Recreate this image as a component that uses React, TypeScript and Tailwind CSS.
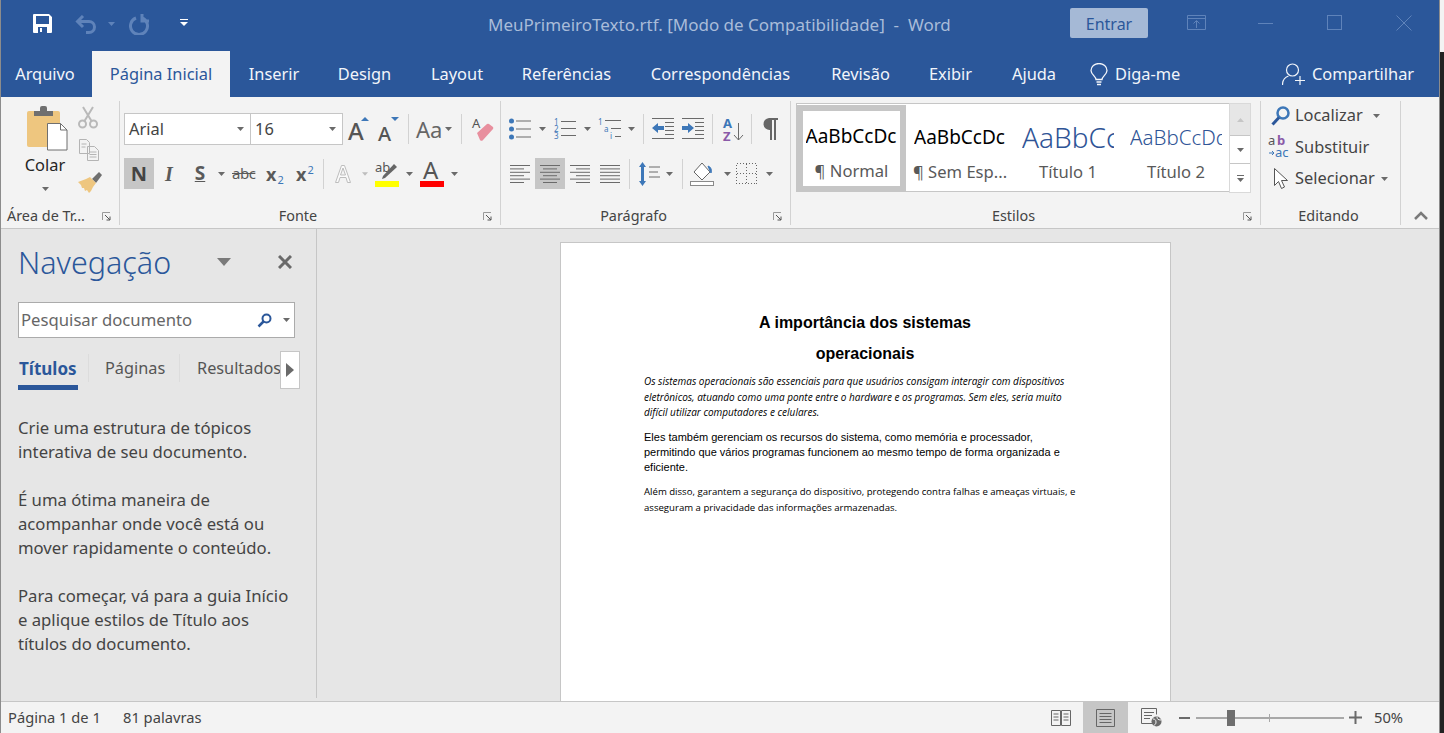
import React from "react";

const G = "#6a6a6a";
const B = "#3d77b8";
const L = "#7a7a7a";

function Caret({ className = "", color = G, w = 7 }: { className?: string; color?: string; w?: number }) {
  return (
    <svg className={`shrink-0 ${className}`} width={w} height={4} viewBox="0 0 7 4">
      <path d="M0 0h7L3.5 4z" fill={color} />
    </svg>
  );
}

function Sep({ className = "" }: { className?: string }) {
  return <div className={`w-px h-[30px] bg-[#d2d2d2] shrink-0 ${className}`} />;
}

function Launcher() {
  return (
    <svg className="absolute right-[8px] top-[6px]" width="9" height="9" viewBox="0 0 9 9" fill="none">
      <path d="M.5 8V.5H8" stroke="#9a9a9a" />
      <path d="M3 3l5 5M8 4.5V8H4.5" stroke="#555" />
    </svg>
  );
}

function Lines({ kind, className = "" }: { kind: "l" | "c" | "r" | "j"; className?: string }) {
  const rows = [0, 1, 2, 3, 4, 5];
  const short = kind === "j" ? 20 : 14;
  return (
    <svg className={`shrink-0 ${className}`} width="20" height="20" viewBox="0 0 20 20">
      {rows.map((r) => {
        const w = r % 2 === 0 ? 20 : short;
        const x = kind === "l" ? 0 : kind === "r" ? 20 - w : (20 - w) / 2;
        return <rect key={r} x={x} y={1 + r * 3.4} width={w} height="1" fill={G} />;
      })}
    </svg>
  );
}

function Tab({ w, children, active }: { w: string; children: React.ReactNode; active?: boolean }) {
  return (
    <div
      className={`${w} h-[46px] pt-[1px] flex items-center justify-center shrink-0 whitespace-nowrap ${
        active ? "bg-[#f3f3f3] text-[#2b579a]" : "text-[#f2f5fa]"
      }`}
    >
      {children}
    </div>
  );
}

function GroupLabel({ children, launcher, className = "" }: { children: React.ReactNode; launcher?: boolean; className?: string }) {
  return (
    <div className={`relative h-[20px] mt-auto mb-[-1px] flex items-center justify-center text-[14.4px] text-[#444] whitespace-nowrap ${className}`}>
      {children}
      {launcher && <Launcher />}
    </div>
  );
}

function Style({ preview, label, selected, previewClass }: { preview: string; label: string; selected?: boolean; previewClass: string }) {
  return (
    <div
      className={`h-[87px] flex flex-col items-center shrink-0 ${
        selected ? "w-[109px] -mt-px border-[6px] border-[#c6c6c6] pt-[2px]" : "w-[108px] pt-[8px] px-[8px]"
      }`}
    >
      <div className={`h-[46px] w-[92px] overflow-hidden flex items-center whitespace-nowrap shrink-0 ${previewClass}`}>{preview}</div>
      <div className="text-[16.6px] leading-[24px] text-[#595959] whitespace-nowrap">{label}</div>
    </div>
  );
}

export default function App() {
  return (
    <div className="w-[1444px] h-[733px] flex overflow-hidden bg-[#222] font-['Noto_Sans',sans-serif]">
      <div className="w-[1440px] h-[733px] flex flex-col border-x border-[#8c8c8c] shrink-0">
        {/* Title bar */}
        <div className="h-[51px] bg-[#2b579a] flex shrink-0 relative">
          <svg className="ml-[32px] mt-[14px]" width="19" height="19" viewBox="0 0 19 19">
            <path fillRule="evenodd" fill="#fff" d="M0 1a1 1 0 011-1h15l3 3v15a1 1 0 01-1 1H1a1 1 0 01-1-1zM3 2v8h13V2zM5 13v6h9v-6zM7 14h2v4H7z" />
          </svg>
          <svg className="ml-[23px] mt-[15px]" width="22" height="19" viewBox="0 0 22 19" fill="none" stroke="#5f83ba" strokeWidth="3">
            <path d="M8 1L2.500 6.500 8 12M3 6.500h11a5.500 5.500 0 010 11h-3" />
          </svg>
          <Caret className="ml-[11px] mt-[22px]" color="#5f83ba" />
          <svg className="ml-[14px] mt-[14px]" width="21" height="21" viewBox="0 0 21 21" fill="none" stroke="#5f83ba" strokeWidth="3">
            <path d="M7 4a8.500 8.500 0 106 0M13 0v7h7" />
          </svg>
          <svg className="ml-[30px] mt-[19px]" width="8" height="7" viewBox="0 0 8 7">
            <path d="M0 0h8v1H0zM0 3h8L4 7z" fill="#fff" />
          </svg>
          <div className="absolute left-[487px] top-[13px] text-[17px] leading-[24px] text-[#a9bcd9] whitespace-pre">MeuPrimeiroTexto.rtf. [Modo de Compatibilidade]  -  Word</div>
          <div className="absolute left-[1069px] top-[8px] w-[78px] h-[30px] pt-[1px] rounded-[2px] bg-[#a5b9d6] text-[#2b579a] text-[16px] flex items-center justify-center">Entrar</div>
          <svg className="absolute left-[1186px] top-[15px]" width="19" height="15" viewBox="0 0 19 15" fill="none" stroke="#5f83ba">
            <path d="M.5.500h18v14H.5zM.5 3.500h18M9.500 13V6M6.500 8.500l3-3 3 3" />
          </svg>
          <div className="absolute left-[1257px] top-[23px] w-[15px] h-px bg-[#5f83ba]" />
          <div className="absolute left-[1326px] top-[15px] w-[15px] h-[15px] border border-[#5f83ba]" />
          <svg className="absolute left-[1395px] top-[15px]" width="16" height="16" viewBox="0 0 16 16" fill="none" stroke="#5f83ba">
            <path d="M.5.500l15 15M15.500.500l-15 15" />
          </svg>
        </div>

        {/* Tabs */}
        <div className="h-[46px] bg-[#2b579a] flex text-[16.4px] shrink-0">
          <Tab w="w-[91px] pr-[3px]">Arquivo</Tab>
          <Tab w="w-[138px]" active>Página Inicial</Tab>
          <Tab w="w-[88px]">Inserir</Tab>
          <Tab w="w-[93px]">Design</Tab>
          <Tab w="w-[92px]">Layout</Tab>
          <Tab w="w-[127px]">Referências</Tab>
          <Tab w="w-[181px]">Correspondências</Tab>
          <Tab w="w-[99px]">Revisão</Tab>
          <Tab w="w-[81px]">Exibir</Tab>
          <Tab w="w-[86px]">Ajuda</Tab>
          <div className="flex items-center pt-[1px] text-[#f2f5fa] w-[205px] shrink-0">
            <svg className="ml-[13px]" width="18" height="23" viewBox="0 0 18 23" fill="none" stroke="#f2f5fa" strokeWidth="1.300">
              <path d="M6 16.500c0-3-5-5-5-9a8 7 0 0116 0c0 4-5 6-5 9zM6.500 19h5M7 21.500h4" />
            </svg>
            <span className="ml-[7px] whitespace-nowrap">Diga-me</span>
          </div>
          <div className="flex items-center pt-[1px] text-[#f2f5fa]">
            <svg width="23" height="23" viewBox="0 0 23 23" fill="none" stroke="#f2f5fa" strokeWidth="1.200">
              <circle cx="10.500" cy="7" r="6" />
              <path d="M.5 22c0-5 3-8 6-9M18 13v9M13 17.500h10" />
            </svg>
            <span className="ml-[7px] whitespace-nowrap">Compartilhar</span>
          </div>
        </div>

        {/* Ribbon */}
        <div className="h-[132px] bg-[#f3f3f3] border-b border-[#c6c6c6] pt-[4px] flex shrink-0">
          {/* Clipboard */}
          <div className="w-[119px] h-[124px] border-r border-[#d2d2d2] flex flex-col shrink-0">
            <div className="flex">
              <div className="w-[88px] flex flex-col items-center shrink-0">
                <svg className="mt-[5px] ml-[5px]" width="41" height="45" viewBox="0 0 41 45">
                  <rect x="0" y="5" width="33" height="36" rx="2" fill="#eec67f" />
                  <path d="M7 5h6V2a2 2 0 012-2h3a2 2 0 012 2v3h6v5H7z" fill="#6f6f6f" />
                  <path d="M20.500 17.500h13l6.500 6.500v20H20.500z" fill="#fff" stroke="#6f6f6f" />
                  <path d="M33.500 17.500V24H40" fill="none" stroke="#6f6f6f" />
                </svg>
                <div className="h-[20px] mt-[4px] text-[16.4px] leading-[20px] text-[#262626]">Colar</div>
                <Caret className="mt-[12px]" />
              </div>
              <div className="-ml-[11px] flex flex-col">
                <svg className="mt-[5px]" width="20" height="23" viewBox="0 0 20 23" fill="none" stroke="#b9b9b9" strokeWidth="2">
                  <circle cx="4.500" cy="18" r="3.500" />
                  <circle cx="15.500" cy="18" r="3.500" />
                  <path d="M6.500 15L15 1M13.500 15L5 1" />
                </svg>
                <svg className="mt-[10px] ml-px" width="20" height="22" viewBox="0 0 20 22" fill="#f3f3f3" stroke="#b4b4b4">
                  <path d="M.5.500h7l3 3v11H.5zM8.500 7.500h7l4 4v10h-11z" />
                  <path d="M2.500 5h5M2.500 8h4M10.500 13h7M10.500 15.500h7M10.500 18h7" />
                </svg>
                <svg className="mt-[11px]" width="24" height="21" viewBox="0 0 24 21">
                  <path d="M14 7l7-7 3 3-6 8z" fill="#6f6f6f" />
                  <path d="M0 10l8-3 4-2 6 6-3 4-2 4-2 2-2-3-2 1-1-3-2 0-1-3-3-3z" fill="#eec67f" />
                </svg>
              </div>
            </div>
            <GroupLabel className="justify-start pl-[6px]" launcher>Área de Tr...</GroupLabel>
          </div>

          {/* Font */}
          <div className="w-[381px] h-[124px] border-r border-[#d2d2d2] flex flex-col shrink-0">
            <div className="flex items-center mt-[12px] pl-[4px] h-[32px]">
              <div className="w-[127px] h-[32px] bg-white border border-[#c6c6c6] flex items-center text-[16.4px] text-[#444] pl-[4px] shrink-0">
                <span>Arial</span>
                <Caret className="ml-auto mr-[6px]" />
              </div>
              <div className="w-[93px] -ml-px h-[32px] bg-white border border-[#c6c6c6] flex items-center text-[16.4px] text-[#444] pl-[4px] shrink-0">
                <span>16</span>
                <Caret className="ml-auto mr-[6px]" />
              </div>
              <svg className="ml-[5px] overflow-visible" width="22" height="26" viewBox="0 0 22 26">
                <text x="0" y="24" fontSize="24" fontWeight="500" fontFamily="Noto Sans" fill="#555">A</text>
                <path d="M13 5l4-4 4 4z" fill={B} />
              </svg>
              <svg className="ml-[8px] overflow-visible" width="22" height="26" viewBox="0 0 22 26">
                <text x="0" y="25" fontSize="20" fontWeight="500" fontFamily="Noto Sans" fill="#555">A</text>
                <path d="M13 1h8l-4 4z" fill={B} />
              </svg>
              <Sep className="ml-[8px]" />
              <span className="ml-[7px] w-[28px] text-[22px] text-[#666] leading-none whitespace-nowrap">Aa</span>
              <Caret className="ml-[1px]" />
              <Sep className="ml-[9px]" />
              <svg className="ml-[10px] overflow-visible" width="22" height="26" viewBox="0 0 22 26">
                <text x="0" y="12" fontSize="13" fontFamily="Noto Sans" fill="#555">A</text>
                <path d="M5 17L15 8a2 2 0 012 0l4 3a2 2 0 010 2L11 24a2 2 0 01-3 0z" fill="#e88f9e" />
              </svg>
            </div>
            <div className="flex items-center mt-[13px] pl-[4px] h-[31px] text-[#5a5a5a]">
              <div className="w-[30px] h-[31px] bg-[#c6c6c6] flex items-center justify-center text-[20px] font-bold text-[#444] shrink-0">N</div>
              <span className="ml-[8px] w-[14px] text-center text-[20px] font-bold italic font-['Liberation_Serif',serif] shrink-0">I</span>
              <span className="ml-[16px] w-[16px] text-center text-[19px] font-bold underline shrink-0 leading-none">S</span>
              <Caret className="ml-[10px]" />
              <span className="ml-[7px] w-[24px] text-[15px] line-through shrink-0 tracking-[-0.5px]">abc</span>
              <div className="ml-[10px] w-[20px] flex items-baseline shrink-0 text-[18px] font-bold leading-none">x<span className="text-[11px] font-normal text-[#3d77b8] ml-[1px] relative top-[3px]">2</span></div>
              <div className="ml-[10px] w-[20px] flex items-baseline shrink-0 text-[18px] font-bold leading-none">x<span className="text-[11px] font-normal text-[#3d77b8] ml-[1px] relative -top-[7px]">2</span></div>
              <Sep className="ml-[7px]" />
              <svg className="ml-[10px]" width="18" height="20" viewBox="0 0 18 20">
                <path d="M1.500 18.500l6-17h3l6 17h-3l-1.500-5h-6l-1.500 5zM6.500 11h5l-2.500-7z" fill="#fbfbfb" stroke="#bdbdbd" />
              </svg>
              <Caret className="ml-[10px]" color="#bdbdbd" w={6} />
              <svg className="ml-[7px] overflow-visible" width="24" height="26" viewBox="0 0 24 26">
                <text x="0" y="11" fontSize="13" fontFamily="Noto Sans" fill="#555">ab</text>
                <path d="M8 15l11-12 3 3-12 11-3 1z" fill="#666" />
                <rect x="0" y="20" width="24" height="6" fill="#ffff00" />
              </svg>
              <Caret className="ml-[7px]" />
              <svg className="ml-[7px] overflow-visible" width="24" height="26" viewBox="0 0 24 26">
                <text x="3" y="18" fontSize="24" fontFamily="Noto Sans" fill="#555">A</text>
                <rect x="0" y="20" width="24" height="6" fill="#ff0000" />
              </svg>
              <Caret className="ml-[7px]" />
            </div>
            <GroupLabel className="pr-[24px]" launcher>Fonte</GroupLabel>
          </div>

          {/* Paragraph */}
          <div className="w-[290px] h-[124px] border-r border-[#d2d2d2] flex flex-col shrink-0">
            <div className="flex items-center mt-[12px] h-[32px]">
              <svg className="ml-[8px]" width="22" height="22" viewBox="0 0 22 22">
                {[3, 11, 19].map((y) => (
                  <g key={y}><circle cx="2.500" cy={y} r="2.500" fill={B} /><rect x="7" y={y - 0.5} width="15" height="1" fill={G} /></g>
                ))}
              </svg>
              <Caret className="ml-[8px]" />
              <svg className="ml-[8px] overflow-visible" width="22" height="22" viewBox="0 0 22 22">
                {[["1", 7], ["2", 14], ["3", 21]].map(([t, y]) => (
                  <g key={t as string}><text x="0" y={y as number} fontSize="8" fontFamily="Noto Sans" fill={B}>{t}</text><rect x="7" y={(y as number) - 4} width="15" height="1" fill={G} /></g>
                ))}
              </svg>
              <Caret className="ml-[8px]" />
              <svg className="ml-[7px] overflow-visible" width="23" height="22" viewBox="0 0 23 22">
                <text x="0" y="7" fontSize="8" fontFamily="Noto Sans" fill={B}>1</text>
                <text x="6" y="14" fontSize="8" fontFamily="Noto Sans" fill={B}>a</text>
                <text x="12" y="21" fontSize="8" fontFamily="Noto Sans" fill={B}>i</text>
                <rect x="7" y="2" width="16" height="1" fill={G} /><rect x="13" y="10" width="10" height="1" fill={G} /><rect x="17" y="18" width="6" height="1" fill={G} />
              </svg>
              <Caret className="ml-[7px]" />
              <Sep className="ml-[8px]" />
              <svg className="ml-[8px]" width="22" height="22" viewBox="0 0 22 22">
                {[0, 4, 8, 12, 16, 20].map((y, i) => <rect key={y} x={i === 0 || i === 5 ? 0 : 13} y={y} width={i === 0 || i === 5 ? 22 : 9} height="1" fill={G} />)}
                <path d="M0 10l6-5v3h6v4H6v3z" fill={B} />
              </svg>
              <svg className="ml-[8px]" width="22" height="22" viewBox="0 0 22 22">
                {[0, 4, 8, 12, 16, 20].map((y, i) => <rect key={y} x={i === 0 || i === 5 ? 0 : 13} y={y} width={i === 0 || i === 5 ? 22 : 9} height="1" fill={G} />)}
                <path d="M12 10L6 5v3H0v4h6v3z" fill={B} />
              </svg>
              <Sep className="ml-[8px]" />
              <svg className="ml-[10px] overflow-visible" width="20" height="24" viewBox="0 0 20 24">
                <text x="0" y="11" fontSize="13" fontWeight="700" fontFamily="Noto Sans" fill={B}>A</text>
                <text x="0" y="24" fontSize="13" fontWeight="700" fontFamily="Noto Sans" fill="#8a5aa8">Z</text>
                <path d="M15.500 6v17M11 18l4.500 5 4.500-5" fill="none" stroke={G} />
              </svg>
              <Sep className="ml-[8px]" />
              <svg className="ml-[10px]" width="16" height="22" viewBox="0 0 16 22">
                <path d="M7 0h9v2h-2v20h-2V2h-2v20H8V12a6 6 0 01-1-12z" fill="#666" />
              </svg>
            </div>
            <div className="flex items-center mt-[13px] h-[31px]">
              <Lines kind="l" className="ml-[9px]" />
              <div className="ml-[5px] w-[30px] h-[31px] bg-[#c6c6c6] flex items-center justify-center shrink-0"><Lines kind="c" /></div>
              <Lines kind="r" className="ml-[5px]" />
              <Lines kind="j" className="ml-[10px]" />
              <Sep className="ml-[9px]" />
              <svg className="ml-[8px]" width="22" height="24" viewBox="0 0 22 24">
                <path d="M4.500 0L8 5H6v14h2l-3.500 5L1 19h2V5H1z" fill={B} />
                <path d="M11 5h11M11 10h9M11 15h11" stroke={G} fill="none" />
              </svg>
              <Caret className="ml-[6px]" />
              <Sep className="ml-[9px]" />
              <svg className="ml-[7px]" width="24" height="24" viewBox="0 0 24 24" fill="none">
                <path d="M12 1L4 10l8 8 8-8z" fill="#fff" stroke="#666" />
                <path d="M18 4c3 1 4 4 3 7l-1-2z" fill={B} stroke={B} />
                <rect x=".5" y="19.500" width="23" height="4" fill="#fff" stroke="#8a8a8a" />
              </svg>
              <Caret className="ml-[10px]" />
              <svg className="ml-[5px]" width="21" height="21" viewBox="0 0 21 21" fill="none" stroke="#666" strokeDasharray="1 2" shapeRendering="crispEdges">
                <path d="M.5.500h20v20H.5zM10.500.500v20M.5 10.500h20" />
              </svg>
              <Caret className="ml-[9px]" />
            </div>
            <GroupLabel className="pr-[24px]" launcher>Parágrafo</GroupLabel>
          </div>

          {/* Styles */}
          <div className="w-[470px] h-[124px] border-r border-[#d2d2d2] flex flex-col shrink-0">
            <div className="flex mt-[2px] ml-[5px]">
              <div className="w-[434px] h-[89px] bg-white border border-[#c6c6c6] flex pt-[2px] overflow-hidden shrink-0">
                <Style selected preview="AaBbCcDc" label="¶ Normal" previewClass="text-[19px] text-black" />
                <Style preview="AaBbCcDc" label="¶ Sem Esp..." previewClass="text-[19px] text-black" />
                <Style preview="AaBbCcDc" label="Título 1" previewClass="text-[28px] font-light text-[#2f5496]" />
                <Style preview="AaBbCcDd" label="Título 2" previewClass="text-[20.5px] font-light text-[#2f5496]" />
              </div>
              <div className="w-[22px] h-[90px] -ml-px flex flex-col shrink-0 border border-[#d9d9d9]">
                <div className="h-[31px] bg-[#e6e6e6] flex items-center justify-center"><svg width="7" height="4" viewBox="0 0 7 4"><path d="M3.500 0L7 4H0z" fill="#c6c6c6" /></svg></div>
                <div className="h-[28px] bg-white flex items-center justify-center border-t border-[#c6c6c6]"><Caret /></div>
                <div className="flex-1 bg-white flex flex-col items-center justify-center border-t border-[#c6c6c6] gap-[2px]"><div className="w-[7px] h-px bg-[#6a6a6a]" /><Caret /></div>
              </div>
            </div>
            <GroupLabel className="pr-[24px]" launcher>Estilos</GroupLabel>
          </div>

          {/* Editing */}
          <div className="w-[140px] h-[124px] border-r border-[#d2d2d2] flex flex-col shrink-0 text-[16.4px] text-[#444]">
            <div className="h-[31px] mt-[-1px] flex items-center">
              <div className="w-[34px] pl-[10px] shrink-0">
                <svg width="19" height="20" viewBox="0 0 19 20" fill="none"><circle cx="12" cy="7" r="5.500" stroke={B} strokeWidth="2.500" /><path d="M8 11.500L1.500 18.500" stroke="#2b579a" strokeWidth="3" /></svg>
              </div>
              <span>Localizar</span>
              <Caret className="ml-[10px]" />
            </div>
            <div className="h-[32px] flex items-center">
              <div className="w-[34px] pl-[7px] shrink-0">
                <svg className="overflow-visible" width="24" height="24" viewBox="0 0 24 24">
                  <text x="0" y="10" fontSize="13" fontFamily="Noto Sans" fill="#555">a</text>
                  <text x="9" y="10" fontSize="13" fontFamily="Noto Sans" fontWeight="700" fill="#8a5aa8">b</text>
                  <text x="7" y="22" fontSize="13" fontFamily="Noto Sans" fill={B}>ac</text>
                  <path d="M1 18h5M4 16l2 2-2 2" fill="none" stroke={B} />
                </svg>
              </div>
              <span>Substituir</span>
            </div>
            <div className="h-[31px] flex items-center">
              <div className="w-[34px] pl-[13px] shrink-0">
                <svg width="15" height="22" viewBox="0 0 15 22" fill="#fff" stroke="#555"><path d="M.5.500v17l4-4 3 7 3-1.500-3-6.500h6z" /></svg>
              </div>
              <span>Selecionar</span>
              <Caret className="ml-[6px]" />
            </div>
            <GroupLabel className="pr-[4px]">Editando</GroupLabel>
          </div>

          {/* Collapse */}
          <div className="flex-1 flex items-end justify-center pb-[5px] pl-[2px] h-[124px]">
            <svg width="14" height="9" viewBox="0 0 14 9" fill="none" stroke="#7a7a7a" strokeWidth="2.500"><path d="M1 8l6-6 6 6" /></svg>
          </div>
        </div>

        {/* Main */}
        <div className="h-[472px] flex bg-[#e6e6e6] shrink-0 overflow-hidden">
          <div className="w-[316px] h-[469px] border-r border-[#c6c6c6] shrink-0 flex flex-col pl-[17px]">
            <div className="flex items-center h-[34px] mt-[16px]">
              <span className="text-[30.5px] font-light text-[#2b579a] leading-none w-[199px] shrink-0 whitespace-nowrap">Navegação</span>
              <Caret w={14} className="h-[8px]" color={L} />
              <svg className="ml-[47px]" width="14" height="14" viewBox="0 0 14 14" fill="none" stroke="#6a6a6a" strokeWidth="3"><path d="M1 1l12 12M13 1L1 13" /></svg>
            </div>
            <div className="mt-[23px] w-[277px] h-[36px] bg-white border border-[#ababab] flex items-center shrink-0">
              <span className="ml-[2px] text-[16.7px] text-[#666] whitespace-nowrap">Pesquisar documento</span>
              <svg className="ml-auto" width="15" height="15" viewBox="0 0 15 15" fill="none"><circle cx="9.500" cy="5.500" r="4" stroke="#2b579a" strokeWidth="2" /><path d="M6.500 8.500L1.500 13.500" stroke="#2b579a" strokeWidth="2.500" /></svg>
              <Caret className="ml-[11px] mr-[4px]" />
            </div>
            <div className="relative h-[39px] mt-[13px] w-[283px] flex items-start text-[16.3px] text-[#555] shrink-0">
              <div className="w-[60px] h-[39px] border-b-[5px] border-[#2b579a] font-bold text-[17px] text-[#2b579a] pt-[5px] pl-[1px] shrink-0 whitespace-nowrap">Títulos</div>
              <div className="w-px h-[28px] bg-[#dcdcdc] ml-[10px] mt-[3px]" />
              <div className="ml-[16px] pt-[5px] w-[60px] whitespace-nowrap shrink-0">Páginas</div>
              <div className="w-px h-[28px] bg-[#dcdcdc] ml-[14px] mt-[3px]" />
              <div className="ml-[17px] pt-[5px] whitespace-nowrap w-[85px] overflow-hidden shrink-0">Resultados</div>
              <div className="absolute left-[262px] top-0 w-[20px] h-[38px] bg-white border border-[#c6c6c6] flex items-center justify-center">
                <svg width="8" height="14" viewBox="0 0 8 14"><path d="M0 0l8 7-8 7z" fill="#6a6a6a" /></svg>
              </div>
            </div>
            <div className="mt-[26px] text-[16.7px] leading-[24px] text-[#444] whitespace-nowrap">
              <p>Crie uma estrutura de tópicos<br />interativa de seu documento.</p>
              <p className="mt-[24px]">É uma ótima maneira de<br />acompanhar onde você está ou<br />mover rapidamente o conteúdo.</p>
              <p className="mt-[24px]">Para começar, vá para a guia Início<br />e aplique estilos de Título aos<br />títulos do documento.</p>
            </div>
          </div>
          <div className="flex-1 pt-[13px] pl-[243px]">
            <div className="w-[611px] h-[480px] bg-white border border-[#c6c6c6] pt-[64px] pl-[83px] text-black">
              <div className="w-[442px] text-center font-['Liberation_Sans',sans-serif] font-bold text-[16px] leading-[31px]">A importância dos sistemas<br />operacionais</div>
              <p className="mt-[5px] font-['Open_Sans',sans-serif] italic text-[10px] leading-[15.5px] whitespace-nowrap">Os sistemas operacionais são essenciais para que usuários consigam interagir com dispositivos<br />eletrônicos, atuando como uma ponte entre o hardware e os programas. Sem eles, seria muito<br />difícil utilizar computadores e celulares.</p>
              <p className="mt-[9px] font-['Liberation_Sans',sans-serif] text-[11px] leading-[15px] whitespace-nowrap">Eles também gerenciam os recursos do sistema, como memória e processador,<br />permitindo que vários programas funcionem ao mesmo tempo de forma organizada e<br />eficiente.</p>
              <p className="mt-[9px] font-['Open_Sans',sans-serif] text-[9.6px] leading-[16px] whitespace-nowrap">Além disso, garantem a segurança do dispositivo, protegendo contra falhas e ameaças virtuais, e<br />asseguram a privacidade das informações armazenadas.</p>
            </div>
          </div>
        </div>

        {/* Status bar */}
        <div className="h-[32px] bg-[#f3f3f3] border-t border-[#c6c6c6] flex items-center text-[14.7px] text-[#444] shrink-0">
          <div className="w-[1050px] flex pl-[7px] shrink-0">
            <span className="w-[115px] whitespace-nowrap">Página 1 de 1</span>
            <span className="whitespace-nowrap">81 palavras</span>
          </div>
          <svg width="20" height="18" viewBox="0 0 20 18" fill="none" stroke="#666">
            <path d="M.5 1.500h9v15h-9zM10.500 1.500h9v15h-9zM2.500 5h5M2.500 8h5M2.500 11h5M12.500 5h5M12.500 8h5M12.500 11h5" />
          </svg>
          <div className="ml-[12px] w-[45px] h-[31px] bg-[#c6c6c6] flex items-center justify-center shrink-0">
            <svg width="19" height="18" viewBox="0 0 19 18" fill="none" stroke="#666">
              <path d="M.5.500h18v17H.5zM3.500 4.500h12M3.500 7.500h12M3.500 10.500h12M3.500 13.500h12" />
            </svg>
          </div>
          <svg className="ml-[13px]" width="21" height="19" viewBox="0 0 21 19" fill="none" stroke="#666">
            <path d="M13 15.500H.5V.5h15v6M3 4.500h10M3 7.500h8M3 10.500h6" />
            <circle cx="15.500" cy="13.500" r="5" fill="#6a6a6a" stroke="none" />
            <path d="M12 11c2 0 3 1 3 3s-1 3-2 3M16 9c0 2 1 3 4 3" stroke="#f3f3f3" />
          </svg>
          <div className="ml-[17px] w-[11px] h-[2px] bg-[#6a6a6a]" />
          <div className="ml-[6px] w-[148px] h-[2px] bg-[#a8a8a8] relative shrink-0">
            <div className="absolute left-[31px] -top-[7px] w-[8px] h-[16px] bg-[#6e6e6e]" />
            <div className="absolute left-[73px] -top-[3px] w-px h-[8px] bg-[#a8a8a8]" />
          </div>
          <svg className="ml-[5px]" width="13" height="13" viewBox="0 0 13 13" fill="#6a6a6a"><path d="M5.500 0h2v5.500H13v2H7.500V13h-2V7.500H0v-2h5.500z" /></svg>
          <span className="ml-[12px] whitespace-nowrap">50%</span>
        </div>
      </div>
      <div className="flex-1 h-[52px] bg-[#f3f3f3]" />
    </div>
  );
}
